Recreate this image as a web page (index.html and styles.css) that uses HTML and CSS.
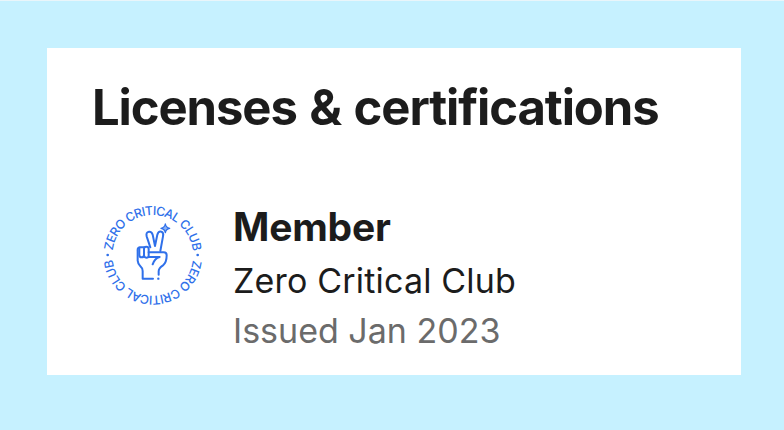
FILE: index.html
```html
<!DOCTYPE html>
<html lang="en">
<head>
  <meta charset="UTF-8" />
  <meta name="viewport" content="width=device-width, initial-scale=1.0"/>
  <title>Licenses &amp; certifications</title>
  <link rel="stylesheet" href="styles.css">
</head>
<body>
  <section class="card">
    <h2>Licenses &amp; certifications</h2>
    <div class="certification">
      <svg class="badge" viewBox="0 0 345 360" role="img" aria-label="Zero Critical Club">
        <defs>
          <path id="topArc" d="M52 181 A121 121 0 0 1 294 181" />
          <path id="bottomArc" d="M294 181 A121 121 0 0 1 52 181" />
        </defs>
        <text class="ring"><textPath href="#topArc" startOffset="14" textLength="354">ZERO CRITICAL CLUB</textPath></text>
        <text class="ring"><textPath href="#bottomArc" startOffset="14" textLength="354">ZERO CRITICAL CLUB</textPath></text>
        <circle class="dot" cx="38" cy="180" r="4" />
        <circle class="dot" cx="308" cy="180" r="4" />
        <g class="hand">
          <path d="M166 157 L155 124 Q152 112 162 110 Q170 109 173 119 L180 153 L187 119 Q190 108 199 110 Q207 113 204 124 L196 168" />
          <path d="M147 157 H134 Q127 158 128 168 V197 Q129 207 135 212 Q143 219 143 228 V251 H174" />
          <path d="M133 160 V179 Q133 187 140 187 Q147 187 147 179" />
          <path d="M147 162 Q147 155 154 155 Q161 155 161 162 V182 Q161 188 154 188 Q147 188 147 181 Z" />
          <path d="M161 172 H206 Q215 172 215 181 Q215 203 204 211 Q191 219 191 229 V239 M162 186 H194 Q179 190 173 208" />
          <circle class="dot" cx="190" cy="251" r="3.5" />
        </g>
        <path class="spark" d="M211 87 Q213 98 224 100 Q213 102 211 113 Q209 102 198 100 Q209 98 211 87 Z" />
      </svg>
      <div class="details">
        <h3>Member</h3>
        <p class="issuer">Zero Critical Club</p>
        <p class="date">Issued Jan 2023</p>
      </div>
    </div>
  </section>
</body>
</html>
```
FILE: styles.css
```css
* {
  box-sizing: border-box;
}

body {
  margin: 0;
  height: 430px;
  padding: 47px 43px 55px 47px;
  background: #c6f1ff;
  border-top: 1px solid #e9f5fa;
  font-family: Inter, sans-serif;
  color: #1c1c1c;
  overflow: hidden;
}

.card {
  height: 327px;
  padding: 30px 45px 0;
  background: #fff;
}

h2,
h3,
p {
  margin: 0;
  white-space: nowrap;
}

h2 {
  font-size: 49px;
  line-height: 60px;
  font-weight: 650;
  letter-spacing: -1.1px;
  word-spacing: 2px;
}

.certification {
  display: flex;
  margin-top: 57px;
  padding-left: 3px;
}

.badge {
  width: 115px;
  height: 120px;
  flex: none;
}

.details {
  padding: 7px 0 0 23px;
}

h3 {
  font-size: 39px;
  line-height: 50px;
  font-weight: 650;
  letter-spacing: -0.2px;
}

.issuer,
.date {
  font-size: 34px;
  line-height: 50px;
  font-weight: 430;
}

.issuer {
  margin-top: 4px;
  letter-spacing: 0.18px;
}

.date {
  color: #6b6b6b;
}

.ring {
  font-size: 37px;
  font-weight: 500;
  fill: #2f70ea;
}

.hand {
  fill: none;
  stroke: #2f70ea;
  stroke-width: 6;
  stroke-linecap: round;
  stroke-linejoin: round;
}

.dot {
  fill: #2f70ea;
  stroke: none;
}

.spark {
  fill: #8db2f4;
  stroke: #2f70ea;
  stroke-width: 4;
  stroke-linejoin: round;
}
```
